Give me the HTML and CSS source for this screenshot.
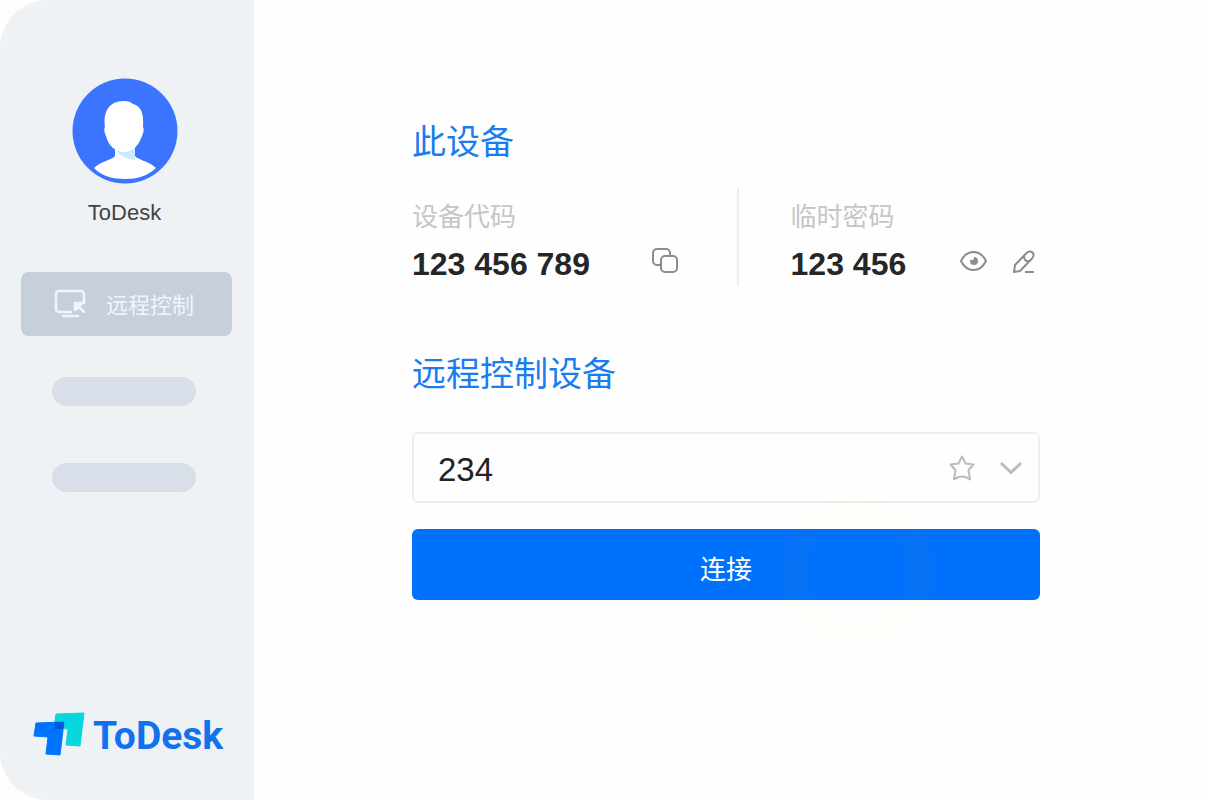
FILE: index.html
```html
<!DOCTYPE html>
<html lang="zh-CN">
<head>
    <meta charset="UTF-8">
    <meta name="viewport" content="width=device-width, initial-scale=1.0">
    <title>ToDesk</title>
    <link rel="stylesheet" href="styles.css">
</head>
<body>

    <div class="app">
        <aside class="sidebar">
            <div class="user">
                <svg class="avatar" viewBox="0 0 106 106" aria-hidden="true">
                    <circle cx="53" cy="53" r="52.5" fill="#3b74ff"/>
                    <path d="M43 64h20v14c3 4 14 5 21 12C76 98 65 101 53 101S29 98 22 90c7-7 18-8 21-12z" fill="#fff"/>
                    <path d="M43 71c5 7 11 10 20 11V67z" fill="#cbe8ff"/>
                    <path d="M33 49c-2-14 3-26 19-26 4 0 7 1 9 3 8 2 11 9 10 23 1 1 1 5-1 9-3 9-9 16-18 16s-16-7-18-16c-2-4-2-8-1-9z" fill="#fff"/>
                </svg>
                <p class="user-name">ToDesk</p>
            </div>

            <nav class="menu">
                <a class="menu-item" href="#remote">
                    <svg class="menu-icon" viewBox="0 0 32 30" fill="none" stroke="currentColor" stroke-width="2.500" stroke-linecap="round" stroke-linejoin="round" aria-hidden="true">
                        <path d="M17 24H5a3 3 0 0 1-3-3V6a3 3 0 0 1 3-3h22a3 3 0 0 1 3 3v9M9 28h15"/>
                        <path d="M21 22v-7h7zM22 16l8 8" fill="currentColor"/>
                    </svg>
                    <span>远程控制</span>
                </a>
                <span class="placeholder"></span>
                <span class="placeholder"></span>
            </nav>

            <div class="logo">
                <svg class="logo-mark" viewBox="0 0 52 48" aria-hidden="true">
                    <path d="M23 2 51 1 47 34 33 33 35 17 21 16z" fill="#08d6dd" stroke="#08d6dd" stroke-linejoin="round"/>
                    <path d="M3 11 31 10 27 43 13 42 15 25 1 24z" fill="#0073ff" stroke="#0073ff" stroke-linejoin="round"/>
                    <path d="M22 10h9l-1 7h-9z" fill="#0057e0"/>
                </svg>
                <span class="logo-text">ToDesk</span>
            </div>
        </aside>

        <main class="content">
            <section>
                <h2 class="title">此设备</h2>
                <div class="device">
                    <div class="device-col">
                        <p class="label">设备代码</p>
                        <div class="value-row">
                            <strong class="value">123 456 789</strong>
                            <button class="icon-btn" type="button" aria-label="复制">
                                <svg width="28" height="28" viewBox="0 0 28 28" fill="none" stroke="currentColor" stroke-width="2" aria-hidden="true">
                                    <rect x="10" y="8" width="16" height="16" rx="4"/>
                                    <path d="M10 17H6a4 4 0 0 1-4-4V5a4 4 0 0 1 4-4h9a4 4 0 0 1 4 4v3"/>
                                </svg>
                            </button>
                        </div>
                    </div>
                    <div class="device-col">
                        <p class="label">临时密码</p>
                        <div class="value-row">
                            <strong class="value">123 456</strong>
                            <div class="actions">
                                <button class="icon-btn" type="button" aria-label="显示密码">
                                    <svg width="28" height="28" viewBox="0 0 28 28" fill="none" stroke="currentColor" stroke-width="2" aria-hidden="true">
                                        <path d="M1 13C4 7 8 4 13.500 4S23 7 26 13c-3 6-7 9-12.500 9S4 19 1 13z"/>
                                        <path d="M14 9a4 4 0 1 1-4 4v-1h2a2 2 0 0 0 2-2z" fill="currentColor" stroke="none"/>
                                    </svg>
                                </button>
                                <button class="icon-btn" type="button" aria-label="修改密码">
                                    <svg width="24" height="28" viewBox="0 0 24 28" fill="none" stroke="currentColor" stroke-width="2" stroke-linejoin="round" aria-hidden="true">
                                        <path d="M2 24l1-7L14 5.500C16.500 3 19 3 20.500 4.500c1.500 1.500 1.500 4-.5 6L8 23zM12 8c0 4 2 6 6 5M13 24h9"/>
                                    </svg>
                                </button>
                            </div>
                        </div>
                    </div>
                </div>
            </section>

            <section>
                <h2 class="title"><label for="remote">远程控制设备</label></h2>
                <form class="connect-form">
                    <div class="field">
                        <input class="field-input" id="remote" type="text" value="234">
                        <button class="icon-btn light" type="button" aria-label="收藏">
                            <svg width="28" height="28" viewBox="0 0 28 28" fill="none" stroke="currentColor" stroke-width="2" stroke-linejoin="round" aria-hidden="true">
                                <path d="M14 2.500 17.500 9.500 25.500 10.500 20.500 16 22 25.500Q18 22.500 14 22.500T6 25.500L7.500 16 2.500 10.500 10.500 9.500z"/>
                            </svg>
                        </button>
                        <button class="icon-btn light" type="button" aria-label="历史设备">
                            <svg width="22" height="28" viewBox="0 0 22 28" fill="none" stroke="currentColor" stroke-width="3" aria-hidden="true">
                                <path d="M1 9l10 9.500L21 9"/>
                            </svg>
                        </button>
                    </div>
                    <button class="connect-btn" type="button">连接<span class="ripple"></span></button>
                </form>
            </section>
        </main>
    </div>

</body>
</html>
```
FILE: styles.css
```css
* {
    margin: 0;
    padding: 0;
    box-sizing: border-box;
}

body {
    background: #fefefe;
    color: #262626;
    font-family: "Liberation Sans", "Noto Sans CJK SC", sans-serif;
}

button,
input {
    border: none;
    background: none;
    font-family: inherit;
}

.app {
    display: flex;
    min-height: 100vh;
}

/* Sidebar */
.sidebar {
    display: flex;
    flex-direction: column;
    flex: 0 0 254px;
    padding: 78px 22px 40px 21px;
    background: #eef2f5;
    border-radius: 48px 0 0 48px;
}

.user {
    display: flex;
    flex-direction: column;
    align-items: center;
    gap: 16px;
    padding-right: 4px;
}

.avatar {
    width: 106px;
    height: 106px;
}

.user-name {
    font-size: 22px;
    line-height: 26px;
    color: #444;
}

.menu {
    display: flex;
    flex-direction: column;
    margin-top: 46px;
}

.menu-item {
    display: flex;
    align-items: center;
    justify-content: center;
    gap: 20px;
    height: 64px;
    padding: 0 5px 2px 0;
    margin-bottom: 41px;
    border-radius: 8px;
    background: #c7cedc;
    color: #f1f5fa;
    font-size: 22px;
    text-decoration: none;
}

.menu-icon {
    width: 32px;
    height: 30px;
}

.placeholder {
    height: 29px;
    margin: 0 36px 57px 31px;
    border-radius: 15px;
    background: #d9dfe9;
}

.logo {
    display: flex;
    align-items: center;
    gap: 8px;
    margin: auto 0 0 12px;
}

.logo-mark {
    flex: none;
    width: 52px;
    height: 48px;
}

.logo-text {
    font-family: Roboto, sans-serif;
    font-size: 39px;
    font-weight: 700;
    line-height: 48px;
    color: #1272ee;
}

/* Main area */
.content {
    display: flex;
    flex-direction: column;
    flex: 1;
    gap: 68px;
    padding: 122px 166px 40px 158px;
}

.title {
    font-size: 34px;
    font-weight: 400;
    line-height: 40px;
    color: #1a7cee;
}

.device {
    display: grid;
    grid-template-columns: 13fr 12fr;
    margin-top: 26px;
}

.device-col {
    padding: 13px 4px 2px 52px;
}

.device-col:first-child {
    padding-left: 0;
    padding-right: 58px;
    border-right: 2px solid #eee;
}

.label {
    font-size: 26px;
    line-height: 32px;
    color: #c6c6c6;
}

.value-row {
    display: flex;
    align-items: center;
    justify-content: space-between;
    margin-top: 11px;
}

.value {
    font-size: 32px;
    line-height: 40px;
    white-space: nowrap;
}

.actions {
    display: flex;
    gap: 24px;
}

.icon-btn {
    display: flex;
    color: #8c8c8c;
    cursor: pointer;
}

.value-row .icon-btn {
    padding-bottom: 4px;
}

.icon-btn.light {
    color: #bbb;
}

.connect-form {
    display: flex;
    flex-direction: column;
    gap: 26px;
    margin-top: 38px;
}

.field {
    display: flex;
    align-items: center;
    gap: 24px;
    height: 71px;
    padding: 0 16px 0 24px;
    border: 2px solid #eee;
    border-radius: 6px;
}

.field-input {
    flex: 1;
    min-width: 0;
    height: 100%;
    padding-top: 4px;
    font-size: 33px;
    color: #222;
    outline: none;
}

.connect-btn {
    position: relative;
    height: 71px;
    padding-top: 6px;
    border-radius: 6px;
    background: #0071fb;
    color: #fff;
    font-size: 26px;
    cursor: pointer;
}

/* Faint click ring over the button */
.ripple {
    position: absolute;
    top: -33px;
    right: 107px;
    width: 152px;
    height: 152px;
    border: 25px solid rgba(255, 180, 0, 0.02);
    border-radius: 50%;
    pointer-events: none;
}
```
